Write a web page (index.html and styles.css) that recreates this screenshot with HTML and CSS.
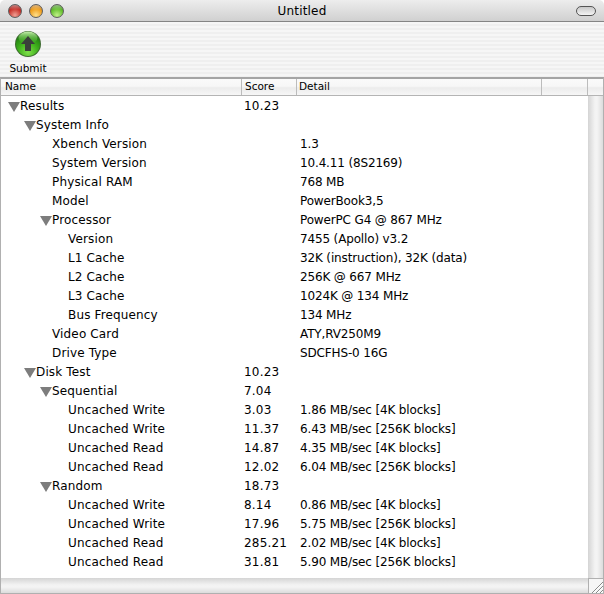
FILE: index.html
```html
<!DOCTYPE html>
<html lang="en">
<head>
<meta charset="utf-8">
<title>Untitled</title>
<link rel="stylesheet" href="styles.css">
</head>
<body>
<div class="window">
  <header class="titlebar">
    <div class="lights">
      <span class="light red"></span>
      <span class="light yellow"></span>
      <span class="light green"></span>
    </div>
    <div class="title">Untitled</div>
    <span class="pill"></span>
  </header>
  <div class="toolbar">
    <div class="tool">
      <svg class="tool-icon" width="28" height="28" viewBox="0 0 28 28">
        <defs>
          <radialGradient id="gb" cx="50%" cy="85%" r="75%">
            <stop offset="0" stop-color="#7fe04a"/>
            <stop offset="0.55" stop-color="#3fb01c"/>
            <stop offset="1" stop-color="#1f7f10"/>
          </radialGradient>
          <linearGradient id="gs" x1="0" y1="0" x2="0" y2="1">
            <stop offset="0" stop-color="#c8efb0"/>
            <stop offset="1" stop-color="#4fb82c" stop-opacity="0"/>
          </linearGradient>
        </defs>
        <circle cx="14" cy="14" r="13" fill="#3d6a30"/>
        <circle cx="14" cy="14" r="12" fill="url(#gb)"/>
        <ellipse cx="14" cy="8" rx="9.5" ry="6.5" fill="url(#gs)"/>
        <path d="M14 6 L21 14 L17 14 L17 21 L11 21 L11 14 L7 14 Z" fill="#3a3f3a"/>
      </svg>
      <div class="tool-label">Submit</div>
    </div>
  </div>
  <div class="table">
    <div class="thead">
      <div class="th th-name">Name</div>
      <div class="th th-score">Score</div>
      <div class="th th-detail">Detail</div>
      <div class="th th-extra"></div>
      <div class="th th-end"></div>
    </div>
    <div class="tbody">
      <div class="rows">
        <div class="row"><div class="name l0"><i class="tri"></i>Results</div><div class="score">10.23</div><div class="detail"></div></div>
        <div class="row"><div class="name l1"><i class="tri"></i>System Info</div><div class="score"></div><div class="detail"></div></div>
        <div class="row"><div class="name l2">Xbench Version</div><div class="score"></div><div class="detail">1.3</div></div>
        <div class="row"><div class="name l2">System Version</div><div class="score"></div><div class="detail">10.4.11 (8S2169)</div></div>
        <div class="row"><div class="name l2">Physical RAM</div><div class="score"></div><div class="detail">768 MB</div></div>
        <div class="row"><div class="name l2">Model</div><div class="score"></div><div class="detail">PowerBook3,5</div></div>
        <div class="row"><div class="name l2b"><i class="tri"></i>Processor</div><div class="score"></div><div class="detail">PowerPC G4 @ 867 MHz</div></div>
        <div class="row"><div class="name l3">Version</div><div class="score"></div><div class="detail">7455 (Apollo) v3.2</div></div>
        <div class="row"><div class="name l3">L1 Cache</div><div class="score"></div><div class="detail">32K (instruction), 32K (data)</div></div>
        <div class="row"><div class="name l3">L2 Cache</div><div class="score"></div><div class="detail">256K @ 667 MHz</div></div>
        <div class="row"><div class="name l3">L3 Cache</div><div class="score"></div><div class="detail">1024K @ 134 MHz</div></div>
        <div class="row"><div class="name l3">Bus Frequency</div><div class="score"></div><div class="detail">134 MHz</div></div>
        <div class="row"><div class="name l2">Video Card</div><div class="score"></div><div class="detail">ATY,RV250M9</div></div>
        <div class="row"><div class="name l2">Drive Type</div><div class="score"></div><div class="detail">SDCFHS-0 16G</div></div>
        <div class="row"><div class="name l1"><i class="tri"></i>Disk Test</div><div class="score">10.23</div><div class="detail"></div></div>
        <div class="row"><div class="name l2b"><i class="tri"></i>Sequential</div><div class="score">7.04</div><div class="detail"></div></div>
        <div class="row"><div class="name l3">Uncached Write</div><div class="score">3.03</div><div class="detail">1.86 MB/sec [4K blocks]</div></div>
        <div class="row"><div class="name l3">Uncached Write</div><div class="score">11.37</div><div class="detail">6.43 MB/sec [256K blocks]</div></div>
        <div class="row"><div class="name l3">Uncached Read</div><div class="score">14.87</div><div class="detail">4.35 MB/sec [4K blocks]</div></div>
        <div class="row"><div class="name l3">Uncached Read</div><div class="score">12.02</div><div class="detail">6.04 MB/sec [256K blocks]</div></div>
        <div class="row"><div class="name l2b"><i class="tri"></i>Random</div><div class="score">18.73</div><div class="detail"></div></div>
        <div class="row"><div class="name l3">Uncached Write</div><div class="score">8.14</div><div class="detail">0.86 MB/sec [4K blocks]</div></div>
        <div class="row"><div class="name l3">Uncached Write</div><div class="score">17.96</div><div class="detail">5.75 MB/sec [256K blocks]</div></div>
        <div class="row"><div class="name l3">Uncached Read</div><div class="score">285.21</div><div class="detail">2.02 MB/sec [4K blocks]</div></div>
        <div class="row"><div class="name l3">Uncached Read</div><div class="score">31.81</div><div class="detail">5.90 MB/sec [256K blocks]</div></div>
      </div>
      <div class="vscroll"></div>
    </div>
    <div class="tfoot">
      <div class="hscroll"></div>
      <div class="grip">
        <svg width="15" height="15" viewBox="0 0 15 15">
          <path d="M14 3 L3 14 M14 7 L7 14 M14 11 L11 14" stroke="#8a8a8a" stroke-width="1" fill="none"/>
          <path d="M14 4 L4 14 M14 8 L8 14 M14 12 L12 14" stroke="#ffffff" stroke-width="1" fill="none"/>
        </svg>
      </div>
    </div>
  </div>
</div>
</body>
</html>
```
FILE: styles.css
```css
* { box-sizing: border-box; }
html, body { margin: 0; padding: 0; background: #fff; }
body {
  font-family: "DejaVu Sans", sans-serif;
  color: #000;
}
.window {
  width: 604px;
  height: 594px;
  display: flex;
  flex-direction: column;
  overflow: hidden;
}
.titlebar {
  height: 22px;
  flex: none;
  display: flex;
  align-items: center;
  position: relative;
  border-radius: 5px 5px 0 0;
  background: linear-gradient(#ededed, #d0d0d0);
  border-bottom: 1px solid #858585;
}
.lights {
  display: flex;
  gap: 7px;
  padding-left: 8px;
}
.light {
  width: 14px;
  height: 14px;
  border-radius: 50%;
  border: 1px solid #5e5e5e;
}
.red { background: linear-gradient(rgba(255,255,255,.45), rgba(255,255,255,0) 40%), radial-gradient(circle at 50% 85%, #f0a094 0, #c9342c 55%, #7a1614 100%); }
.yellow { background: linear-gradient(rgba(255,255,255,.45), rgba(255,255,255,0) 40%), radial-gradient(circle at 50% 85%, #ffdf8a 0, #f0a020 55%, #a86410 100%); }
.green { background: linear-gradient(rgba(255,255,255,.45), rgba(255,255,255,0) 40%), radial-gradient(circle at 50% 85%, #c0f088 0, #66c030 55%, #2a7014 100%); }
.title {
  position: absolute;
  left: 0;
  right: 0;
  top: 3px;
  text-align: center;
  font-size: 12px;
  line-height: 16px;
  letter-spacing: 0.2px;
}
.pill {
  position: absolute;
  left: 576px;
  top: 6px;
  width: 20px;
  height: 10px;
  border: 1px solid #555;
  border-radius: 5px;
  background: linear-gradient(#c8c8c8, #f4f4f4);
}
.toolbar {
  height: 55px;
  flex: none;
  padding: 8px 0 0 8px;
  background: repeating-linear-gradient(#f6f6f6 0, #f6f6f6 2px, #efefef 2px, #efefef 4px);
}
.tool {
  width: 40px;
  display: flex;
  flex-direction: column;
  align-items: center;
}
.tool-icon { display: block; }
.tool-label {
  font-size: 10.5px;
  line-height: 13px;
  margin-top: 4px;
  white-space: nowrap;
}
.table {
  flex: 1;
  display: flex;
  flex-direction: column;
  min-height: 0;
  border-top: 2px solid #a5a5a5;
  border-left: 1px solid #b0b0b0;
  border-right: 1px solid #b0b0b0;
  border-bottom: 1px solid #b0b0b0;
}
.thead {
  height: 17px;
  flex: none;
  display: flex;
  background: linear-gradient(#fafafa 0, #f7f7f7 45%, #ececec 55%, #f6f6f6 100%);
  border-bottom: 1px solid #b4b4b4;
  font-size: 10.5px;
  line-height: 15px;
}
.th { border-right: 1px solid #bcbcbc; padding-left: 4px; }
.th-name { width: 241px; }
.th-score { width: 55px; padding-left: 3px; }
.th-detail { width: 245px; padding-left: 2px; }
.th-extra { width: 46px; }
.th-end { flex: 1; border-right: 0; }
.tbody {
  flex: 1;
  display: flex;
  min-height: 0;
}
.rows {
  flex: 1;
  padding-top: 1px;
  font-size: 12px;
}
.row {
  display: flex;
  height: 19px;
  line-height: 19px;
  white-space: nowrap;
}
.name { width: 241px; display: flex; align-items: center; letter-spacing: 0.15px; }
.score { width: 56px; padding-left: 2px; letter-spacing: 0.2px; }
.detail { flex: 1; padding-left: 2px; letter-spacing: -0.15px; }
.l0 { padding-left: 7px; }
.l1 { padding-left: 23px; }
.l2 { padding-left: 51px; }
.l2b { padding-left: 39px; }
.l3 { padding-left: 67px; }
.tri {
  width: 0;
  height: 0;
  flex: none;
  border-left: 6px solid transparent;
  border-right: 6px solid transparent;
  border-top: 10px solid #7d7d7d;
}
.vscroll {
  width: 15px;
  flex: none;
  background: linear-gradient(90deg, #d4d4d4, #f2f2f2 45%, #f4f4f4 60%, #dcdcdc);
}
.tfoot {
  height: 15px;
  flex: none;
  display: flex;
}
.hscroll {
  flex: 1;
  background: linear-gradient(#d4d4d4, #f2f2f2 45%, #f4f4f4 60%, #dcdcdc);
}
.grip {
  width: 15px;
  flex: none;
  border-left: 1px solid #b0b0b0;
  border-top: 1px solid #b0b0b0;
  background: #f6f6f6;
  overflow: hidden;
}
.grip svg { display: block; }
```
